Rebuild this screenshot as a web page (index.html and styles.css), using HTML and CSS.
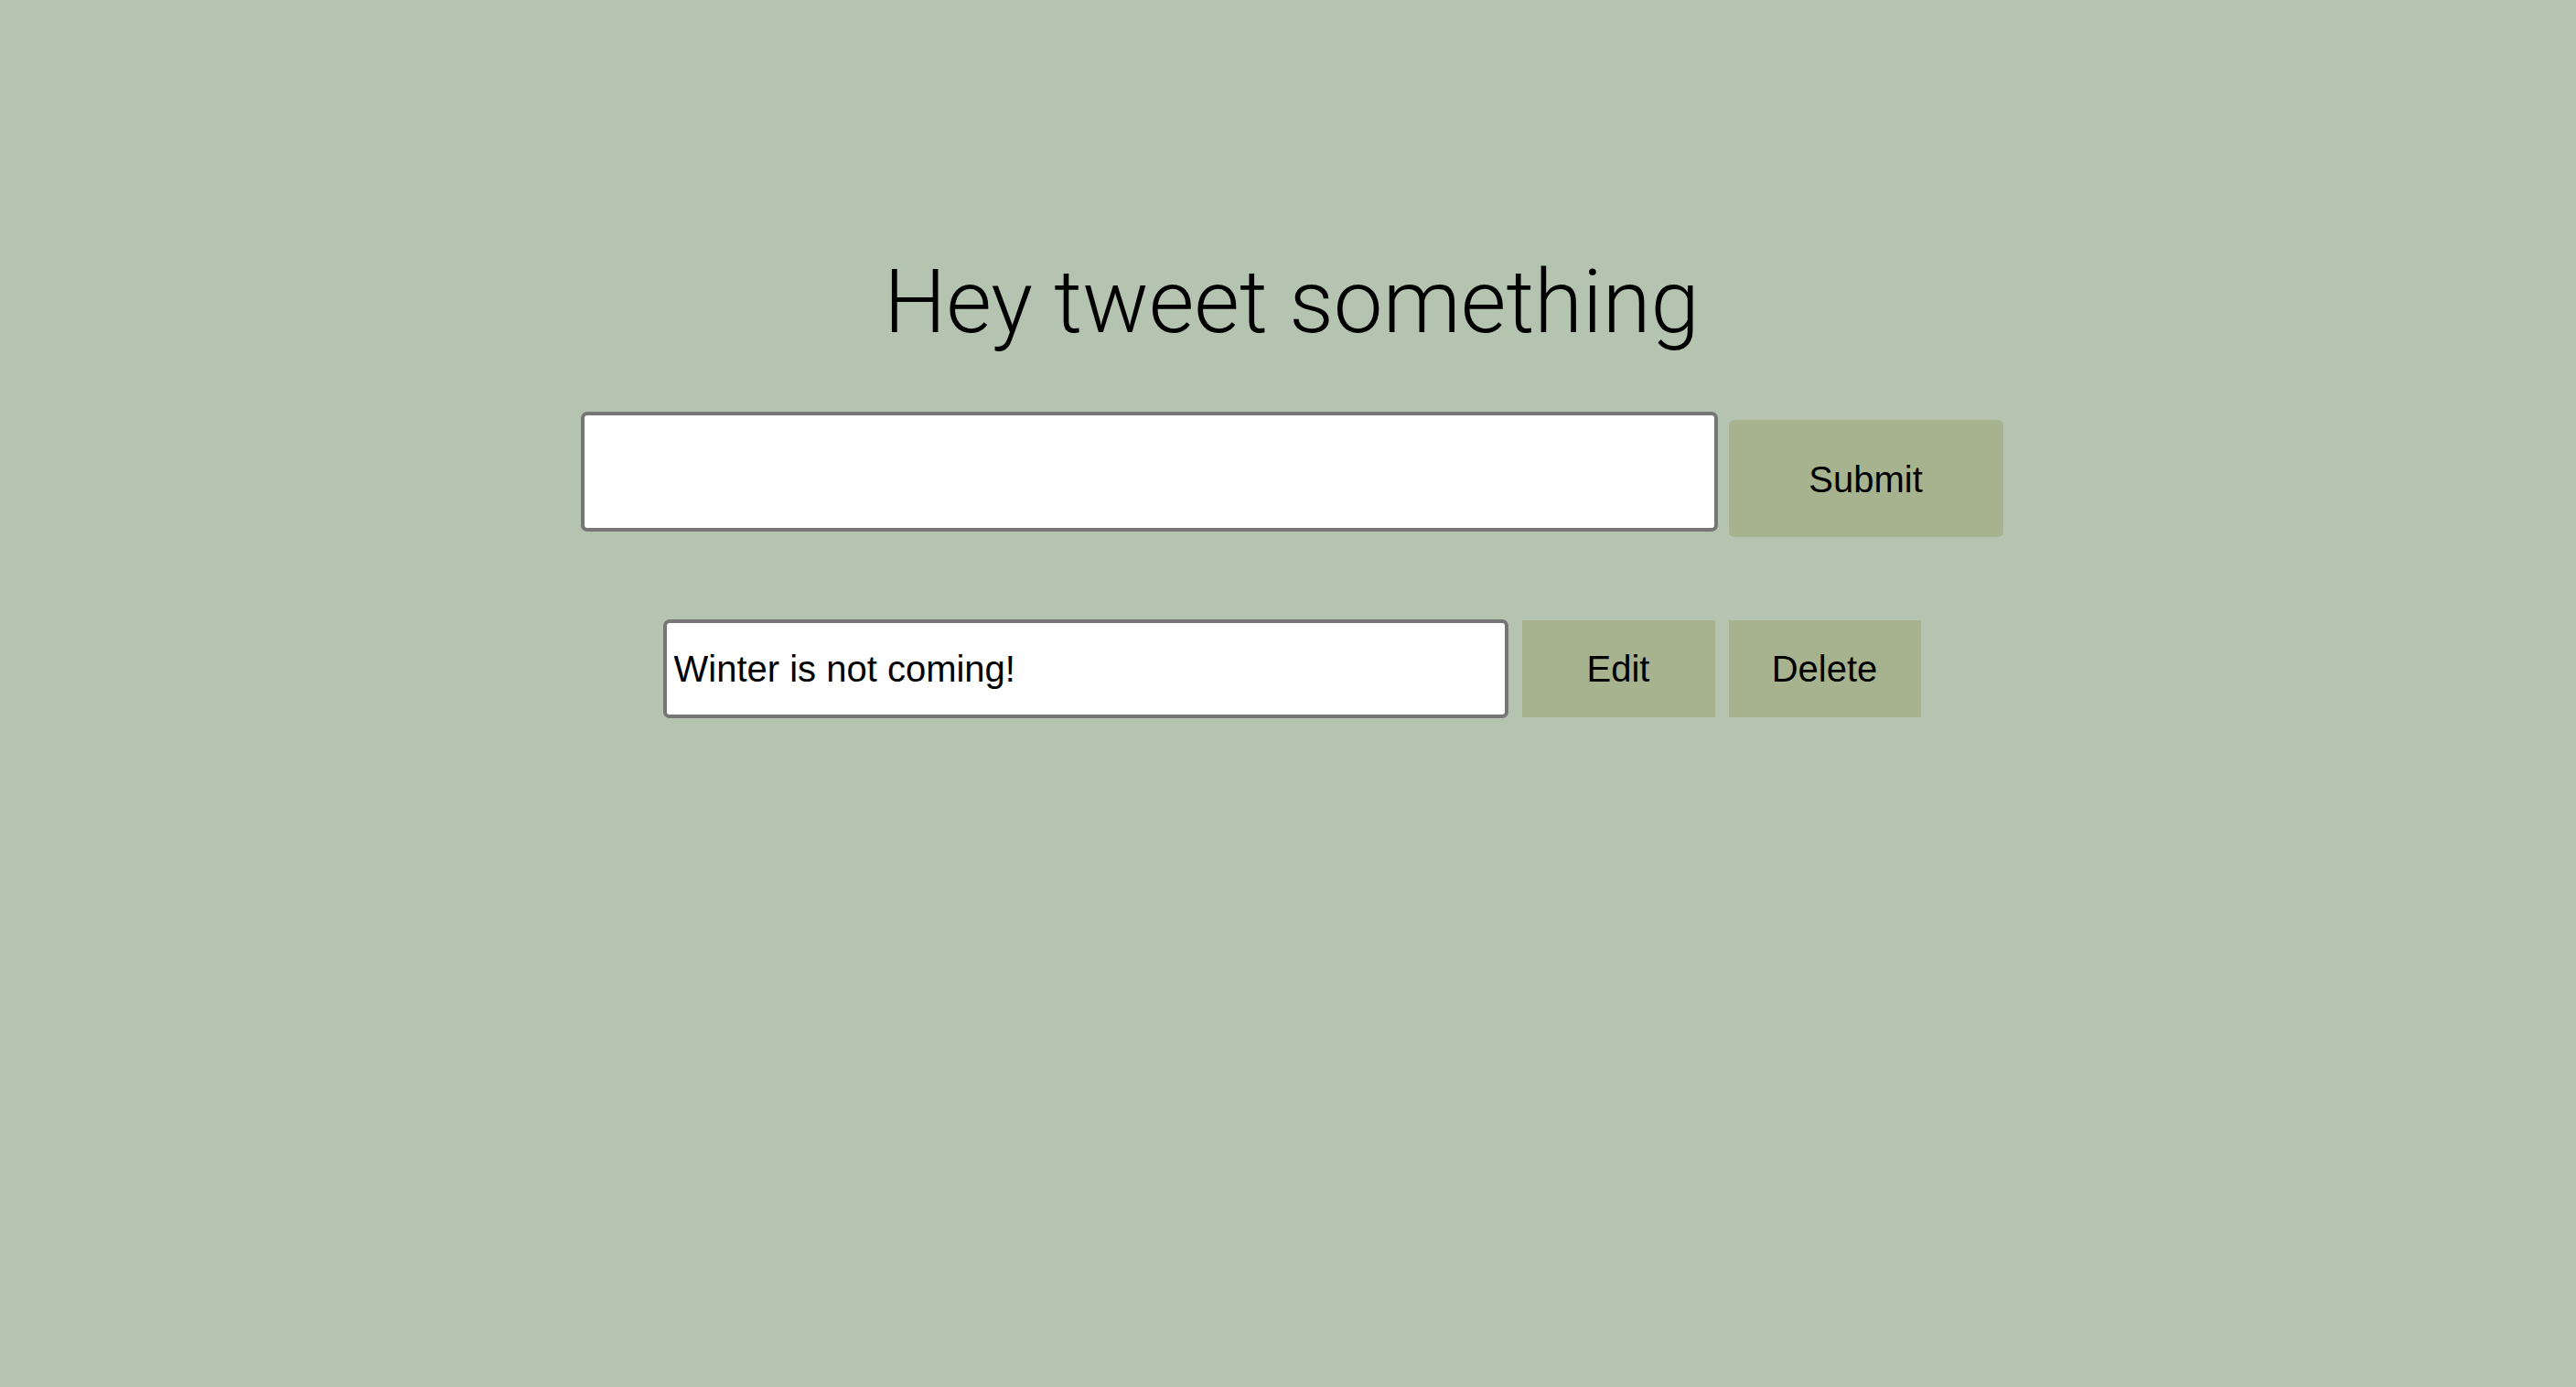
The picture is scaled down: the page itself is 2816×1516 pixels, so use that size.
FILE: index.html
```html
<!DOCTYPE html>
<html lang="en">
<head>
<meta charset="utf-8">
<title>Tweets</title>
<link rel="stylesheet" href="styles.css">
</head>
<body>
<main class="app">
  <h1 class="title">Hey tweet something</h1>
  <form class="compose">
    <input class="compose-input" type="text">
    <button class="btn btn-submit" type="button">Submit</button>
  </form>
  <div class="tweet">
    <input class="tweet-input" type="text" value="Winter is not coming!">
    <button class="btn btn-square" type="button">Edit</button>
    <button class="btn btn-square btn-delete" type="button">Delete</button>
  </div>
</main>
</body>
</html>
```
FILE: styles.css
```css
html, body {
  margin: 0;
  padding: 0;
  height: 100%;
}
body {
  background: #b4c4b1;
  font-family: "Liberation Sans", Arial, sans-serif;
  color: #000;
  overflow: hidden;
}
.app {
  display: flex;
  flex-direction: column;
  align-items: center;
  padding: 274px 0 0 8px;
  box-sizing: border-box;
}
.title {
  margin: 0;
  font-family: Roboto, "Liberation Sans", sans-serif;
  font-weight: 300;
  font-size: 96px;
  line-height: normal;
  color: #000;
}
.compose {
  display: flex;
  align-items: flex-start;
  gap: 12px;
  margin: 64px 0 0 0;
}
.compose-input {
  box-sizing: border-box;
  width: 1243px;
  height: 131px;
  border: 4px solid #767676;
  border-radius: 7px;
  background: #fff;
  padding: 0 8px;
  font-family: "Liberation Sans", Arial, sans-serif;
  font-size: 40px;
  outline: none;
}
.btn {
  box-sizing: border-box;
  border: none;
  background: #a6b38e;
  color: #000;
  font-family: "Liberation Sans", Arial, sans-serif;
  font-size: 40px;
  padding: 0;
  cursor: pointer;
}
.btn-submit {
  width: 300px;
  height: 128px;
  margin-top: 9px;
  padding-top: 3px;
  border-radius: 6px;
}
.tweet {
  display: flex;
  align-items: center;
  gap: 15px;
  margin-top: 90px;
}
.tweet-input {
  box-sizing: border-box;
  width: 924px;
  height: 108px;
  border: 4px solid #767676;
  border-radius: 7px;
  background: #fff;
  padding: 0 8px;
  font-family: "Liberation Sans", Arial, sans-serif;
  font-size: 40px;
  color: #000;
  outline: none;
}
.btn-square {
  width: 211px;
  height: 106px;
  border-radius: 0;
}
.btn-delete {
  width: 210px;
}
```
